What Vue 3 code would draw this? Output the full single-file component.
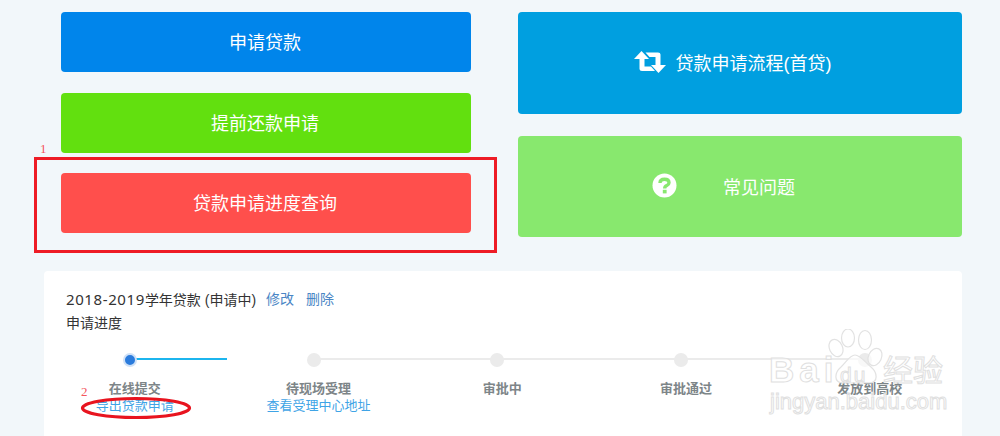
<template>
  <div class="page">
    <div class="actions">
      <div class="col-left">
        <div class="btn blue">申请贷款</div>
        <div class="btn green">提前还款申请</div>
        <div class="btn red">贷款申请进度查询</div>
        <span class="mark-num one">1</span>
        <div class="mark-box"></div>
      </div>
      <div class="col-right">
        <div class="btn big sky">
          <svg class="icon-retweet" width="32" height="22" viewBox="0 0 32 22">
            <path fill="#fff" d="M7.500 0 15 8H10.500V15.500H17L21 20H8Q5.500 20 5.500 18V8H0Z" />
            <path fill="#fff" d="M24.500 22 17 14H21.500V6H15.500L11.500 1.500H24Q26.500 1.500 26.500 3.500V14H32Z" />
          </svg>
          <span>贷款申请流程(首贷)</span>
        </div>
        <div class="btn big lime">
          <svg class="icon-help" width="25" height="25" viewBox="0 0 25 25">
            <circle cx="12.500" cy="12.500" r="12" fill="#fff" />
            <path fill="none" stroke="#88e86e" stroke-width="3.400" d="M8 10Q8 6.200 12.500 6.200T17 9.800Q17 11.500 14.800 12.600 12.700 13.600 12.700 15.500" />
            <rect x="10.800" y="16.800" width="3.800" height="3.600" fill="#88e86e" />
          </svg>
          <span>常见问题</span>
        </div>
      </div>
    </div>

    <div class="card">
      <div class="title-row">
        <span><span class="num">2018-2019</span>学年贷款 (申请中)</span>
        <a class="edit">修改</a>
        <a class="edit">删除</a>
      </div>
      <div class="sub">申请进度</div>
      <div class="steps">
        <div v-for="(s, i) in steps" :key="s.name" class="step">
          <div class="track">
            <span class="line" :class="{ on: i === 0 }"></span>
            <span class="dot" :class="{ current: i === 0 }"></span>
          </div>
          <div class="step-name">{{ s.name }}</div>
          <a v-if="s.link" class="step-link">{{ s.link }}</a>
        </div>
      </div>
      <span class="mark-num two">2</span>
      <svg class="mark-ellipse" width="112" height="24" viewBox="0 0 112 24">
        <ellipse cx="56" cy="12" rx="53.500" ry="9.500" fill="none" stroke="#e8141f" stroke-width="3.200" />
      </svg>
    </div>

    <div class="watermark">
      <svg class="paw" width="60" height="62" viewBox="0 0 60 62">
        <g fill="rgba(255,255,255,0.65)" stroke="#e2e2e2" stroke-width="1.200">
          <ellipse cx="8" cy="19" rx="6.500" ry="9" transform="rotate(-25 8 19)" />
          <ellipse cx="20" cy="9" rx="6.500" ry="9" />
          <ellipse cx="37" cy="11" rx="6.500" ry="9.500" />
          <ellipse cx="47" cy="28" rx="6.500" ry="9" transform="rotate(25 47 28)" />
          <path d="M27 26C22 26 19 32 13 38 6 44 6 53 14 54H42C50 53 50 44 43 38 36 32 32 26 27 26Z" />
        </g>
      </svg>
      <span class="wm-text wm-bai">Bai</span>
      <span class="wm-text wm-du">du</span>
      <span class="wm-text wm-jy">经验</span>
      <span class="wm-text wm-url">jingyan.baidu.com</span>
    </div>
  </div>
</template>

<script setup>
const steps = [
  { name: "在线提交", link: "导出贷款申请" },
  { name: "待现场受理", link: "查看受理中心地址" },
  { name: "审批中" },
  { name: "审批通过" },
  { name: "发放到高校" },
];
</script>

<style>
html,
body {
  margin: 0;
  background: #f2f7fa;
}
</style>

<style scoped>
.page {
  position: relative;
  width: 1000px;
  height: 436px;
  overflow: hidden;
  padding-top: 12px;
  box-sizing: border-box;
  background: #f2f7fa;
  font-family: "Liberation Sans", "Noto Sans CJK SC", sans-serif;
}
.actions {
  display: flex;
  padding-left: 61px;
  gap: 47px;
}
.col-left {
  position: relative;
  width: 410px;
  display: flex;
  flex-direction: column;
  gap: 20.500px;
}
.col-right {
  width: 444px;
  display: flex;
  flex-direction: column;
  gap: 22px;
}
.btn {
  height: 60px;
  box-sizing: border-box;
  padding: 0 2px 2px 0;
  border-radius: 4px;
  display: flex;
  align-items: center;
  justify-content: center;
  color: #fff;
  font-size: 18px;
}
.big {
  height: 102px;
}
.blue {
  background: #0085eb;
}
.green {
  background: #62e00f;
}
.red {
  background: #ff4f4c;
}
.sky {
  background: #009fe0;
  padding-right: 15px;
}
.lime {
  height: 101px;
  background: #88e86e;
  padding-right: 33px;
}
.icon-retweet {
  margin-right: 10px;
}
.icon-help {
  margin-right: 46px;
}
.mark-box {
  position: absolute;
  left: -27px;
  top: 145px;
  width: 463px;
  height: 96px;
  box-sizing: border-box;
  border: 3px solid #ee1c25;
}
.mark-num {
  position: absolute;
  font-family: "Liberation Serif", serif;
  font-size: 13px;
  line-height: 14px;
  color: #f4555c;
}
.one {
  left: -21px;
  top: 130px;
}
.card {
  position: relative;
  width: 918px;
  height: 165px;
  box-sizing: border-box;
  margin: 34px 0 0 44px;
  padding: 20px 22px 0;
  background: #fff;
  border-radius: 4px 4px 0 0;
  color: #333;
  font-size: 14px;
}
.title-row {
  display: flex;
  gap: 10px;
  line-height: 17px;
}
.num {
  font-size: 15px;
  letter-spacing: 0.600px;
  font-family: "Noto Sans", sans-serif;
}
.edit {
  color: #4a86c5;
}
.edit + .edit {
  margin-left: 2px;
}
.sub {
  margin-top: 6px;
  line-height: 17px;
}
.steps {
  display: flex;
  margin: 21px 0 0 -28px;
}
.step {
  flex: none;
  width: 183.750px;
  text-align: center;
}
.track {
  position: relative;
  height: 16px;
}
.line {
  position: absolute;
  left: 50%;
  top: 5px;
  width: 100%;
  height: 2px;
  background: #ebebeb;
}
.line.on {
  width: 53%;
  background: #1cb5ee;
}
.step:last-child .line {
  display: none;
}
.dot {
  position: absolute;
  left: 50%;
  top: 0;
  width: 14px;
  height: 14px;
  margin-left: -7px;
  border-radius: 50%;
  background: #ebebeb;
}
.dot.current {
  box-sizing: border-box;
  background: #2b7bdc;
  border: 2px solid #cfe1f7;
}
.step-name {
  margin-top: 12px;
  padding-left: 10px;
  font-size: 13px;
  line-height: 16px;
  font-weight: 700;
  color: #7d8588;
}
.step-link {
  display: block;
  padding-left: 10px;
  font-size: 13px;
  line-height: 18px;
  color: #3fa4e6;
}
.two {
  left: 37px;
  top: 114px;
}
.mark-ellipse {
  position: absolute;
  left: 36px;
  top: 125px;
}
.watermark {
  position: absolute;
  left: 766px;
  top: 328px;
  width: 234px;
  height: 108px;
  pointer-events: none;
}
.paw {
  position: absolute;
  left: 62px;
  top: 1px;
}
.wm-text {
  position: absolute;
  color: rgba(255, 255, 255, 0.65);
  -webkit-text-stroke: 1px #e0e0e0;
  white-space: nowrap;
}
.wm-bai {
  left: 3px;
  top: 22px;
  font-size: 35px;
  font-weight: 700;
  letter-spacing: 5px;
  line-height: 40px;
}
.wm-du {
  left: 74px;
  top: 35px;
  font-size: 21px;
  letter-spacing: 2px;
  line-height: 24px;
}
.wm-jy {
  left: 117px;
  top: 26px;
  font-size: 30px;
  line-height: 34px;
}
.wm-url {
  left: 4px;
  top: 61px;
  font-size: 22px;
  line-height: 26px;
}
</style>
